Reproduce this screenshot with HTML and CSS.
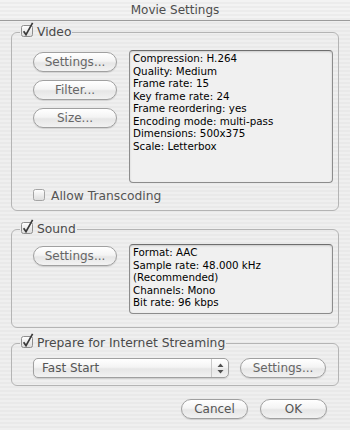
FILE: index.html
```html
<!DOCTYPE html>
<html lang="en">
<head>
    <meta charset="UTF-8">
    <title>Movie Settings</title>
    <link rel="stylesheet" href="styles.css">
</head>
<body>
    <div class="window">
        <!-- Barra de titulo -->
        <div class="titlebar">Movie Settings</div>

        <!-- Video -->
        <fieldset class="group group-video">
            <legend>
                <span class="check">
                    <svg width="14" height="16" viewBox="0 0 14 16"><rect x="0.5" y="3.5" width="11" height="11" rx="2" fill="url(#box)" stroke="#8e8e8e"/><path d="M2.6 9.2 L5 12.6 L11.6 0.8" fill="none" stroke="#3a3a3a" stroke-width="1.7"/><defs><linearGradient id="box" x1="0" y1="0" x2="0" y2="1"><stop offset="0" stop-color="#ffffff"/><stop offset="1" stop-color="#dcdcdc"/></linearGradient></defs></svg>
                </span>Video
            </legend>
            <div class="body body-video">
                <div class="row">
                    <div class="buttons">
                        <button class="btn">Settings...</button>
                        <button class="btn">Filter...</button>
                        <button class="btn">Size...</button>
                    </div>
                    <div class="info info-video">
                        Compression: H.264<br>
                        Quality: Medium<br>
                        Frame rate: 15<br>
                        Key frame rate: 24<br>
                        Frame reordering: yes<br>
                        Encoding mode: multi-pass<br>
                        Dimensions: 500x375<br>
                        Scale: Letterbox
                    </div>
                </div>
                <div class="option">
                    <span class="check">
                        <svg width="14" height="16" viewBox="0 0 14 16"><rect x="0.5" y="3.5" width="11" height="11" rx="2" fill="url(#box)" stroke="#a4a4a4"/></svg>
                    </span>Allow Transcoding
                </div>
            </div>
        </fieldset>

        <!-- Sonido -->
        <fieldset class="group group-sound">
            <legend>
                <span class="check">
                    <svg width="14" height="16" viewBox="0 0 14 16"><rect x="0.5" y="3.5" width="11" height="11" rx="2" fill="url(#box)" stroke="#8e8e8e"/><path d="M2.6 9.2 L5 12.6 L11.6 0.8" fill="none" stroke="#3a3a3a" stroke-width="1.7"/></svg>
                </span>Sound
            </legend>
            <div class="body body-sound">
                <div class="row">
                    <div class="buttons">
                        <button class="btn">Settings...</button>
                    </div>
                    <div class="info info-sound">
                        Format: AAC<br>
                        Sample rate: 48.000 kHz<br>
                        (Recommended)<br>
                        Channels: Mono<br>
                        Bit rate: 96 kbps
                    </div>
                </div>
            </div>
        </fieldset>

        <!-- Streaming -->
        <fieldset class="group group-stream">
            <legend>
                <span class="check">
                    <svg width="14" height="16" viewBox="0 0 14 16"><rect x="0.5" y="3.5" width="11" height="11" rx="2" fill="url(#box)" stroke="#8e8e8e"/><path d="M2.6 9.2 L5 12.6 L11.6 0.8" fill="none" stroke="#3a3a3a" stroke-width="1.7"/></svg>
                </span>Prepare for Internet Streaming
            </legend>
            <div class="body body-stream">
                <div class="popup">
                    <span>Fast Start</span>
                    <span class="arrows">
                        <svg width="7" height="11" viewBox="0 0 7 11"><path d="M3.5 0.5 L6.5 4 L0.5 4 Z M0.5 7 L6.5 7 L3.5 10.5 Z" fill="#505050"/></svg>
                    </span>
                </div>
                <button class="btn btn-stream">Settings...</button>
            </div>
        </fieldset>

        <div class="footer">
            <button class="btn btn-foot">Cancel</button>
            <button class="btn btn-foot">OK</button>
        </div>
    </div>
</body>
</html>
```

FILE: styles.css
```css
body {
    margin: 0;
    padding: 0;
    font-family: "DejaVu Sans", "Liberation Sans", sans-serif;
    background: repeating-linear-gradient(to bottom, #efefef 0, #efefef 2px, #e9e9e9 2px, #e9e9e9 4px);
    color: #4a4a4a;
}

.window {
    width: 350px;
    height: 430px;
    display: flex;
    flex-direction: column;
}

.titlebar {
    height: 20px;
    line-height: 20px;
    text-align: center;
    font-size: 12px;
    color: #4d4d4d;
    border-bottom: 1px solid #9c9c9c;
    background: repeating-linear-gradient(to bottom, #f3f3f3 0, #f3f3f3 2px, #ececec 2px, #ececec 4px);
}

.group {
    margin: 0 11px;
    padding: 0;
    border: 1px solid #b4b4b4;
    border-radius: 6px;
    min-width: 0;
}

.group legend {
    margin-left: 8px;
    padding: 0 1px;
    height: 14px;
    line-height: 14px;
    font-size: 12.3px;
    color: #4a4a4a;
    display: flex;
    align-items: center;
}

.check {
    width: 14px;
    height: 16px;
    margin-right: 2px;
    margin-top: -4px;
    display: inline-block;
}

.group-video {
    margin-top: 4px;
}

.group-sound {
    margin-top: 11px;
}

.group-stream {
    margin-top: 8px;
}

.body {
    padding-left: 21px;
    padding-right: 5px;
}

.body-video {
    padding-top: 11px;
    padding-bottom: 7px;
}

.body-sound {
    padding-top: 8px;
    padding-bottom: 13px;
}

.body-stream {
    padding-top: 8px;
    padding-bottom: 7px;
    display: flex;
    gap: 11px;
}

.row {
    display: flex;
    gap: 12px;
}

.buttons {
    display: flex;
    flex-direction: column;
    gap: 8px;
    padding-top: 2px;
}

.btn {
    width: 84px;
    height: 20px;
    padding: 0;
    border: 1px solid #a0a0a0;
    border-radius: 10px;
    background: linear-gradient(to bottom, #ffffff 0%, #f4f4f4 45%, #e6e6e6 55%, #f2f2f2 100%);
    box-shadow: 0 1px 1px rgba(0, 0, 0, 0.12);
    font-family: "DejaVu Sans", "Liberation Sans", sans-serif;
    font-size: 12px;
    color: #666666;
}

.info {
    flex: 1;
    border: 1px solid #8c8c8c;
    border-top-color: #6e6e6e;
    border-radius: 4px;
    background: #f0f0f0;
    box-shadow: inset 0 1px 2px rgba(0, 0, 0, 0.15);
    padding: 1px 3px;
    font-size: 10.3px;
    line-height: 12.5px;
    color: #000;
}

.info-video {
    height: 129px;
}

.info-sound {
    height: 66px;
}

.option {
    margin-top: 6px;
    display: flex;
    align-items: center;
    font-size: 12.3px;
    height: 14px;
    color: #555555;
}

.option .check {
    margin-right: 4px;
}

.popup {
    width: 196px;
    height: 20px;
    box-sizing: border-box;
    border: 1px solid #a0a0a0;
    border-radius: 5px;
    background: linear-gradient(to bottom, #ffffff 0%, #f4f4f4 45%, #e6e6e6 55%, #f2f2f2 100%);
    box-shadow: 0 1px 1px rgba(0, 0, 0, 0.12);
    display: flex;
    align-items: center;
    justify-content: space-between;
    padding-left: 8px;
    font-size: 12px;
    color: #555555;
}

.arrows {
    width: 16px;
    height: 18px;
    border-left: 1px solid #c8c8c8;
    display: flex;
    align-items: center;
    justify-content: center;
}

.btn-stream {
    width: 86px;
}

.footer {
    display: flex;
    justify-content: flex-end;
    gap: 12px;
    padding-right: 23px;
    margin-top: 13px;
}

.btn-foot {
    width: 67px;
    color: #555555;
}
```
